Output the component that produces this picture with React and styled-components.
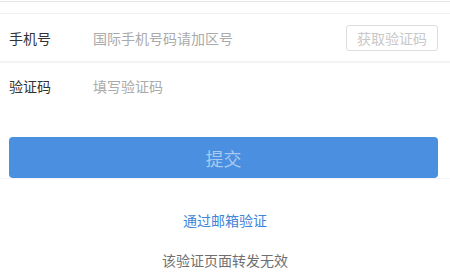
import React from "react";
import styled, { createGlobalStyle } from "styled-components";

const Global = createGlobalStyle`
  body {
    margin: 0;
    background: #fff;
    font-family: "Noto Sans CJK SC", "Noto Sans", sans-serif;
  }
`;

const Page = styled.div`
  width: 450px;
  height: 276px;
  overflow: hidden;
`;

const TopBar = styled.div`
  margin-top: 1px;
  height: 11px;
  border-top: 1px solid #e6e6e6;
  border-bottom: 1px solid #f2f2f2;
`;

const Row = styled.div`
  display: flex;
  align-items: center;
  height: ${(p) => (p.last ? "46px" : "49px")};
  padding: 0 12px 0 9px;
  border-bottom: ${(p) => (p.last ? "none" : "2px solid #f3f3f3")};
  box-sizing: border-box;
`;

const Label = styled.div`
  width: 84px;
  font-size: 14px;
  color: #333;
`;

const Input = styled.input`
  flex: 1;
  border: none;
  outline: none;
  padding: 0;
  font-family: inherit;
  font-size: 14px;
  color: #333;
  background: transparent;
  &::placeholder {
    color: #aaa;
  }
`;

const CodeButton = styled.button`
  width: 92px;
  height: 26px;
  border: 1px solid #ddd;
  border-radius: 3px;
  background: #fff;
  font-family: inherit;
  font-size: 14px;
  color: #c8c8c8;
  padding: 0;
`;

const Submit = styled.button`
  display: block;
  margin: 28px 12px 0 9px;
  width: 429px;
  height: 41px;
  border: none;
  border-radius: 4px;
  background: #4a8fe0;
  color: #a9c9f0;
  font-family: inherit;
  font-size: 18px;
  padding: 0;
`;

const Footer = styled.div`
  display: flex;
  flex-direction: column;
  align-items: center;
  border-top: 1px solid #f5f5f5;
`;

const Link = styled.a`
  margin-top: 31px;
  font-size: 14px;
  color: #3f84d8;
  text-decoration: none;
`;

const Note = styled.div`
  margin-top: 20px;
  font-size: 14px;
  color: #6f6f6f;
`;

export default function App() {
  return (
    <Page>
      <Global />
      <TopBar />
      <Row>
        <Label>手机号</Label>
        <Input placeholder="国际手机号码请加区号" />
        <CodeButton>获取验证码</CodeButton>
      </Row>
      <Row last>
        <Label>验证码</Label>
        <Input placeholder="填写验证码" />
      </Row>
      <Submit>提交</Submit>
      <Footer>
        <Link href="#">通过邮箱验证</Link>
        <Note>该验证页面转发无效</Note>
      </Footer>
    </Page>
  );
}
